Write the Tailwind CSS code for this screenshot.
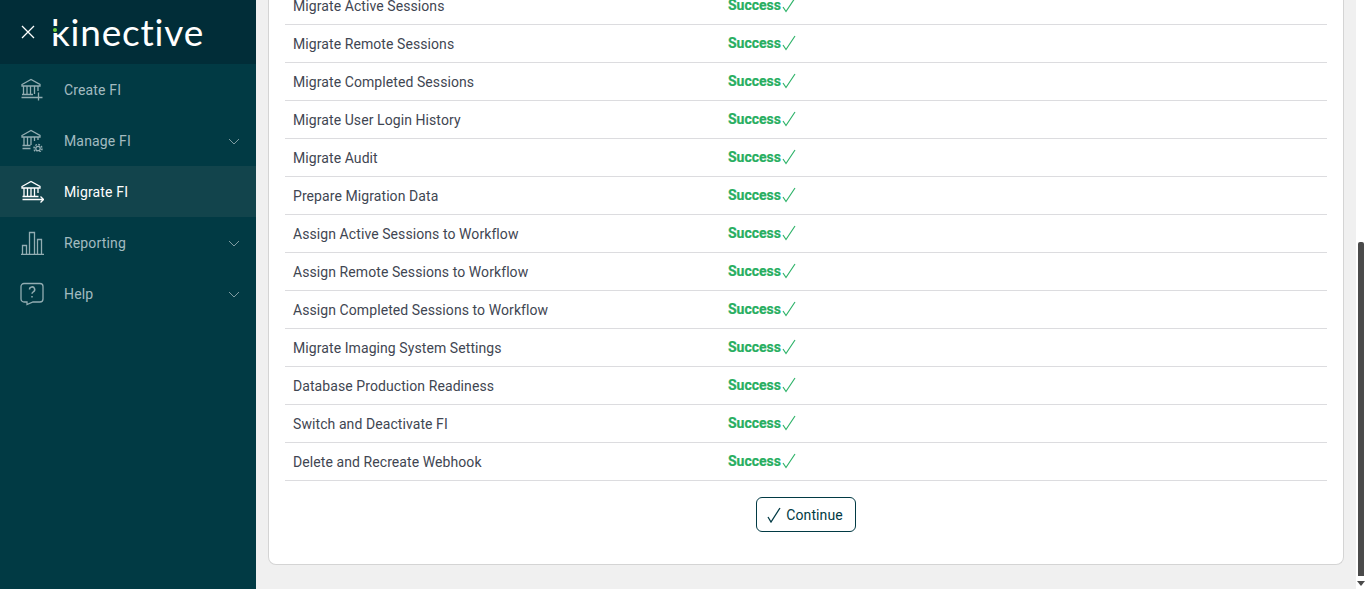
<!DOCTYPE html>
<html lang="en">
<head>
<meta charset="UTF-8" />
<title>Migrate FI</title>
<script src="https://cdn.jsdelivr.net/npm/@tailwindcss/browser@4"></script>
</head>
<body class="h-[589px] overflow-hidden bg-[#f0f0f0] font-['Roboto',sans-serif]">
<div class="flex h-[589px]">
  <!-- sidebar -->
  <aside class="flex w-[256px] shrink-0 flex-col bg-[#013a44]">
    <div class="flex h-[64px] items-center bg-[#012d38] pl-[21px]">
      <svg class="h-[14px] w-[14px]" viewBox="0 0 14 14" fill="none" stroke="#fff" stroke-width="1.3"><path d="M1 1l12 12M13 1L1 13"/></svg>
      <div class="relative ml-[16px] mt-[-1px] text-[37px] leading-none font-normal tracking-[0.8px] text-white font-['Lato',sans-serif]">kinective<span class="absolute left-[1px] top-[13px] flex h-[7px] w-[6px] items-center bg-[#012d38]"><span class="ml-[1px] h-[4px] w-[4px] rounded-full bg-[#6fd13f]"></span></span></div>
    </div>
    <nav class="text-[14px] tracking-[0.15px] text-[#a3bbc0]">
      <a class="flex h-[51px] items-center pl-[20px]">
        <svg class="mt-[-2px] h-[24px] w-[24px] shrink-0" viewBox="0 0 24 24" fill="none" stroke="#93adb2" stroke-width="1.3"><path d="M2 7.500L11 2.500l9 5v1.500H2zM3.500 9v8M7 9v8M10.500 9v8M14.500 9v8M18 9v5M2 17.500h11M1.500 20.500h13M18.500 15.500v8M14.500 20.500h8"/></svg>
        <span class="ml-[20px] pt-[1px]">Create FI</span>
      </a>
      <a class="flex h-[51px] items-center pl-[20px] pr-[16px]">
        <svg class="mt-[-2px] h-[24px] w-[24px] shrink-0" viewBox="0 0 24 24" fill="none" stroke="#93adb2" stroke-width="1.3"><path d="M2 7.500L11 2.500l9 5v1.500H2zM4 9v8M7.500 9v8M11 9v8M14.500 9v4M18 9v3M2.500 17.500h8M2.500 20.500h8"/><circle cx="18" cy="20.500" r="2.200"/><circle cx="18" cy="20.500" r="4" stroke-dasharray="1.800 1.300" stroke-width="1.500"/></svg>
        <span class="ml-[20px] flex-1 pt-[1px]">Manage FI</span>
        <svg class="mt-[1px] h-[7px] w-[12px]" viewBox="0 0 12 7" fill="none" stroke="#7f9ba1"><path d="M1 1l5 5 5-5"/></svg>
      </a>
      <a class="flex h-[51px] items-center bg-[#12444c] pl-[20px] text-white">
        <svg class="mt-[-2px] h-[24px] w-[24px] shrink-0" viewBox="0 0 24 24" fill="none" stroke="#fff" stroke-width="1.300"><path d="M2 7.500L11 2.500l9 5v1.500H2zM4 9v8M7.500 9v8M11 9v8M14.500 9v8M18 9v5M2.500 17.500h16M2.500 20.500h21M20.500 17.500l3 3-3 3"/></svg>
        <span class="ml-[20px] pt-[1px]">Migrate FI</span>
      </a>
      <a class="flex h-[51px] items-center pl-[20px] pr-[16px]">
        <svg class="h-[24px] w-[24px] shrink-0" viewBox="0 0 24 24" fill="none" stroke="#93adb2" stroke-width="1.300"><path d="M1 23.500h23M2.500 23.500v-9h4v9M9.500 23.500V1.500h5v22M17.500 23.500V8.500h4v15"/></svg>
        <span class="ml-[20px] flex-1 pt-[1px]">Reporting</span>
        <svg class="mt-[1px] h-[7px] w-[12px]" viewBox="0 0 12 7" fill="none" stroke="#7f9ba1"><path d="M1 1l5 5 5-5"/></svg>
      </a>
      <a class="flex h-[51px] items-center pl-[20px] pr-[16px]">
        <svg class="h-[24px] w-[24px] shrink-0" viewBox="0 0 24 24" fill="none" stroke="#93adb2" stroke-width="1.300"><path d="M4 1.500h16a3 3 0 0 1 3 3v12.500a3 3 0 0 1-3 3h-7l-6 2.500v-2.500H4a3 3 0 0 1-3-3V4.500a3 3 0 0 1 3-3z"/><path d="M9.500 7.500a2.600 2.600 0 1 1 3.800 2.300c-.9.500-1.300 1-1.300 2" stroke-width="1.500"/><path d="M12 14v1.600" stroke-width="1.500"/></svg>
        <span class="ml-[20px] flex-1 pt-[1px]">Help</span>
        <svg class="mt-[1px] h-[7px] w-[12px]" viewBox="0 0 12 7" fill="none" stroke="#7f9ba1"><path d="M1 1l5 5 5-5"/></svg>
      </a>
    </nav>
  </aside>

  <!-- main -->
  <main class="flex min-w-0 flex-1 flex-col justify-end overflow-hidden pb-[24px] pl-[12px] pr-[12px]">
    <div class="shrink-0 rounded-b-[8px] border border-t-0 border-[#d4d4d4] bg-white px-[16px] pb-[32px] text-[14px] text-[#3f4652]">
      <div>
        <div class="flex h-[38px] items-center border-b border-[#dcdcdf] pl-[8px]"><span class="w-[435px] pt-[2px] tracking-[0.08px]">Migrate Active Sessions</span><span class="flex items-center font-bold text-[#27ae60] [-webkit-text-stroke:0.2px]">Success<svg class="ml-[1px] mt-[-1px] h-[16px] w-[14px]" viewBox="0 0 14 16" fill="none" stroke="#2fb36a" stroke-width="1.200"><path d="M1 10l3 4.500L13 1"/></svg></span></div>
        <div class="flex h-[38px] items-center border-b border-[#dcdcdf] pl-[8px]"><span class="w-[435px] pt-[2px] tracking-[0.08px]">Migrate Remote Sessions</span><span class="flex items-center font-bold text-[#27ae60] [-webkit-text-stroke:0.2px]">Success<svg class="ml-[1px] mt-[-1px] h-[16px] w-[14px]" viewBox="0 0 14 16" fill="none" stroke="#2fb36a" stroke-width="1.200"><path d="M1 10l3 4.500L13 1"/></svg></span></div>
        <div class="flex h-[38px] items-center border-b border-[#dcdcdf] pl-[8px]"><span class="w-[435px] pt-[2px] tracking-[0.08px]">Migrate Completed Sessions</span><span class="flex items-center font-bold text-[#27ae60] [-webkit-text-stroke:0.2px]">Success<svg class="ml-[1px] mt-[-1px] h-[16px] w-[14px]" viewBox="0 0 14 16" fill="none" stroke="#2fb36a" stroke-width="1.200"><path d="M1 10l3 4.500L13 1"/></svg></span></div>
        <div class="flex h-[38px] items-center border-b border-[#dcdcdf] pl-[8px]"><span class="w-[435px] pt-[2px] tracking-[0.08px]">Migrate User Login History</span><span class="flex items-center font-bold text-[#27ae60] [-webkit-text-stroke:0.2px]">Success<svg class="ml-[1px] mt-[-1px] h-[16px] w-[14px]" viewBox="0 0 14 16" fill="none" stroke="#2fb36a" stroke-width="1.200"><path d="M1 10l3 4.500L13 1"/></svg></span></div>
        <div class="flex h-[38px] items-center border-b border-[#dcdcdf] pl-[8px]"><span class="w-[435px] pt-[2px] tracking-[0.08px]">Migrate Audit</span><span class="flex items-center font-bold text-[#27ae60] [-webkit-text-stroke:0.2px]">Success<svg class="ml-[1px] mt-[-1px] h-[16px] w-[14px]" viewBox="0 0 14 16" fill="none" stroke="#2fb36a" stroke-width="1.200"><path d="M1 10l3 4.500L13 1"/></svg></span></div>
        <div class="flex h-[38px] items-center border-b border-[#dcdcdf] pl-[8px]"><span class="w-[435px] pt-[2px] tracking-[0.08px]">Prepare Migration Data</span><span class="flex items-center font-bold text-[#27ae60] [-webkit-text-stroke:0.2px]">Success<svg class="ml-[1px] mt-[-1px] h-[16px] w-[14px]" viewBox="0 0 14 16" fill="none" stroke="#2fb36a" stroke-width="1.200"><path d="M1 10l3 4.500L13 1"/></svg></span></div>
        <div class="flex h-[38px] items-center border-b border-[#dcdcdf] pl-[8px]"><span class="w-[435px] pt-[2px] tracking-[0.08px]">Assign Active Sessions to Workflow</span><span class="flex items-center font-bold text-[#27ae60] [-webkit-text-stroke:0.2px]">Success<svg class="ml-[1px] mt-[-1px] h-[16px] w-[14px]" viewBox="0 0 14 16" fill="none" stroke="#2fb36a" stroke-width="1.200"><path d="M1 10l3 4.500L13 1"/></svg></span></div>
        <div class="flex h-[38px] items-center border-b border-[#dcdcdf] pl-[8px]"><span class="w-[435px] pt-[2px] tracking-[0.08px]">Assign Remote Sessions to Workflow</span><span class="flex items-center font-bold text-[#27ae60] [-webkit-text-stroke:0.2px]">Success<svg class="ml-[1px] mt-[-1px] h-[16px] w-[14px]" viewBox="0 0 14 16" fill="none" stroke="#2fb36a" stroke-width="1.200"><path d="M1 10l3 4.500L13 1"/></svg></span></div>
        <div class="flex h-[38px] items-center border-b border-[#dcdcdf] pl-[8px]"><span class="w-[435px] pt-[2px] tracking-[0.08px]">Assign Completed Sessions to Workflow</span><span class="flex items-center font-bold text-[#27ae60] [-webkit-text-stroke:0.2px]">Success<svg class="ml-[1px] mt-[-1px] h-[16px] w-[14px]" viewBox="0 0 14 16" fill="none" stroke="#2fb36a" stroke-width="1.200"><path d="M1 10l3 4.500L13 1"/></svg></span></div>
        <div class="flex h-[38px] items-center border-b border-[#dcdcdf] pl-[8px]"><span class="w-[435px] pt-[2px] tracking-[0.08px]">Migrate Imaging System Settings</span><span class="flex items-center font-bold text-[#27ae60] [-webkit-text-stroke:0.2px]">Success<svg class="ml-[1px] mt-[-1px] h-[16px] w-[14px]" viewBox="0 0 14 16" fill="none" stroke="#2fb36a" stroke-width="1.200"><path d="M1 10l3 4.500L13 1"/></svg></span></div>
        <div class="flex h-[38px] items-center border-b border-[#dcdcdf] pl-[8px]"><span class="w-[435px] pt-[2px] tracking-[0.08px]">Database Production Readiness</span><span class="flex items-center font-bold text-[#27ae60] [-webkit-text-stroke:0.2px]">Success<svg class="ml-[1px] mt-[-1px] h-[16px] w-[14px]" viewBox="0 0 14 16" fill="none" stroke="#2fb36a" stroke-width="1.200"><path d="M1 10l3 4.500L13 1"/></svg></span></div>
        <div class="flex h-[38px] items-center border-b border-[#dcdcdf] pl-[8px]"><span class="w-[435px] pt-[2px] tracking-[0.08px]">Switch and Deactivate FI</span><span class="flex items-center font-bold text-[#27ae60] [-webkit-text-stroke:0.2px]">Success<svg class="ml-[1px] mt-[-1px] h-[16px] w-[14px]" viewBox="0 0 14 16" fill="none" stroke="#2fb36a" stroke-width="1.200"><path d="M1 10l3 4.500L13 1"/></svg></span></div>
        <div class="flex h-[38px] items-center border-b border-[#dcdcdf] pl-[8px]"><span class="w-[435px] pt-[2px] tracking-[0.08px]">Delete and Recreate Webhook</span><span class="flex items-center font-bold text-[#27ae60] [-webkit-text-stroke:0.2px]">Success<svg class="ml-[1px] mt-[-1px] h-[16px] w-[14px]" viewBox="0 0 14 16" fill="none" stroke="#2fb36a" stroke-width="1.200"><path d="M1 10l3 4.500L13 1"/></svg></span></div>
      </div>
      <div class="flex justify-center pt-[16px]">
        <button class="flex h-[35px] w-[100px] items-center justify-center rounded-[6px] border border-[#013a44] tracking-[0.1px] text-[#013a44]">
          <svg class="mr-[5px] ml-[-2px] h-[16px] w-[14px]" viewBox="0 0 14 16" fill="none" stroke="#013a44" stroke-width="1.300"><path d="M1 10l3 5L13 1"/></svg><span class="pt-[1px]">Continue</span>
        </button>
      </div>
    </div>
  </main>

  <!-- page scrollbar -->
  <div class="flex w-[10px] shrink-0 flex-col items-center bg-white pt-[242px]">
    <div class="h-[334px] w-[6px] rounded-t-[2px] bg-[#4a4a4a]"></div>
    <div class="mt-[5px] h-0 w-0 border-x-[4px] border-t-[5px] border-x-transparent border-t-[#4a4a4a]"></div>
  </div>
</div>
</body>
</html>
